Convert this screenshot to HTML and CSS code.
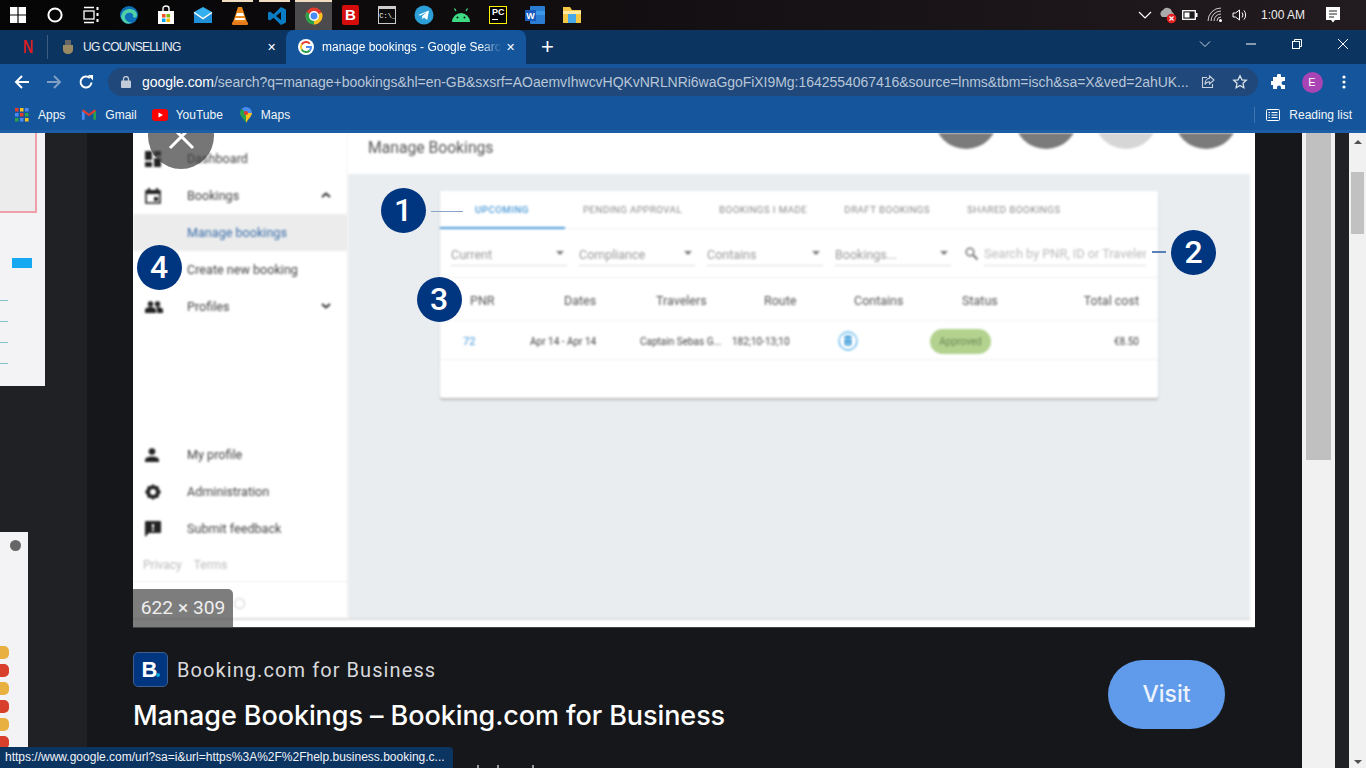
FILE: index.html
```html
<!DOCTYPE html>
<html lang="en">
<head>
<meta charset="UTF-8">
<title>manage bookings - Google Search</title>
<link rel="stylesheet" href="styles.css">
</head>
<body>

<div class="taskbar">
  <div class="task-icons">
    <span class="task"><svg width="18" height="18" viewBox="0 0 18 18"><path fill="#fff" d="M1 1h7.400v7.400H1zM9.600 1H17v7.400H9.600zM1 9.600h7.400V17H1zM9.600 9.600H17V17H9.600z"/></svg></span>
    <span class="task"><svg width="18" height="18" viewBox="0 0 18 18"><circle cx="9" cy="9" r="6.600" fill="none" stroke="#fff" stroke-width="2"/></svg></span>
    <span class="task"><svg width="18" height="18" viewBox="0 0 18 18" fill="none" stroke="#fff" stroke-width="1.300"><path d="M1 1.500h10M1 16.500h10"/><rect x="1" y="5" width="10" height="8"/><path d="M14.500 1v3M14.500 7v3M14.500 13v3" stroke-width="2"/></svg></span>
    <span class="task"><svg width="20" height="20" viewBox="0 0 20 20"><circle cx="10" cy="10" r="9" fill="#0c6fb8"/><path fill="#4fd1a5" d="M2 12c1-6 5-8 9-8 4 0 7 3 7 6 0 3-3 3-4 2 1-3-2-5-5-4-4 1-4 6-1 8 1 1 3 2 5 1-3 3-9 2-11-5z"/></svg></span>
    <span class="task"><svg width="18" height="20" viewBox="0 0 18 20"><path fill="none" stroke="#fff" stroke-width="1.400" d="M6 6V3.500C6 2 7 1 9 1s3 1 3 2.500V6"/><rect x="1" y="6" width="16" height="13" fill="#fff"/><path fill="#f25022" d="M5 9h3.500v3.500H5z"/><path fill="#7fba00" d="M9.500 9H13v3.500H9.500z"/><path fill="#00a4ef" d="M5 13.500h3.500V17H5z"/><path fill="#ffb900" d="M9.500 13.500H13V17H9.500z"/></svg></span>
    <span class="task"><svg width="20" height="18" viewBox="0 0 20 18"><path fill="#1f8fd8" d="M1 6h18v11H1z"/><path fill="#35b0ee" d="M1 6l9-5 9 5-9 6z"/><path fill="none" stroke="#fff" stroke-width="1.500" d="M1 6.500l9 6 9-6"/></svg></span>
    <span class="task task-open"><svg width="18" height="20" viewBox="0 0 18 20"><path fill="#f08a1d" d="M7 1h4l5 15H2z"/><path fill="#fff" d="M6 7h6l1 3H5zM4.500 12h9l.7 2H3.800z"/><rect x="1" y="16" width="16" height="3" rx="1" fill="#e8791a"/></svg></span>
    <span class="task task-open"><svg width="18" height="18" viewBox="0 0 18 18"><path fill="#0a7cc6" d="M13 0l5 2.400v13.200L13 18 5.500 10.800 2 13.500 0 12.500V5.500l2-1 3.500 2.700zM13 5L8 9l5 4z"/></svg></span>
    <span class="task task-on"><svg width="18" height="18" viewBox="0 0 18 18"><circle cx="9" cy="9" r="8.500" fill="#e33b2e"/><path fill="#f9c221" d="M9 9l7.700-3.500A8.500 8.500 0 0 1 9 17.500z"/><path fill="#2aa24b" d="M9 9L9 17.500A8.500 8.500 0 0 1 1.400 5z"/><circle cx="9" cy="9" r="4.200" fill="#4a8af4" stroke="#fff" stroke-width="1.500"/></svg></span>
    <span class="task"><span class="bdf">B</span></span>
    <span class="task"><span class="cmd"><i></i>C:\_</span></span>
    <span class="task"><svg width="20" height="20" viewBox="0 0 20 20"><circle cx="10" cy="10" r="9.500" fill="#2d9fd8"/><path fill="#fff" d="M4 10l11-4.500-1.800 9.500-3.200-2.400-1.600 1.600-.4-3 4.500-4-6 3.300z"/></svg></span>
    <span class="task"><svg width="20" height="16" viewBox="0 0 20 16"><path fill="#3ddc84" d="M1 15a9 9 0 0 1 18 0z"/><path stroke="#3ddc84" stroke-width="1.300" d="M5 4L3.500 1.500M15 4l1.500-2.500"/><circle cx="6.500" cy="10.500" r="1" fill="#111"/><circle cx="13.500" cy="10.500" r="1" fill="#111"/></svg></span>
    <span class="task"><span class="pycharm">PC<i></i></span></span>
    <span class="task"><svg width="20" height="18" viewBox="0 0 20 18"><rect x="5" y="0" width="15" height="18" rx="1" fill="#2b7cd3"/><rect x="11" y="5" width="9" height="4" fill="#41a5ee" opacity=".7"/><rect x="0" y="4" width="11" height="11" fill="#185abd"/><text x="5.500" y="13" text-anchor="middle" class="word-w">W</text></svg></span>
    <span class="task"><svg width="20" height="18" viewBox="0 0 20 18"><path fill="#f3c744" d="M1 1h7l2 3h9v13H1z"/><path fill="#ffe9a0" d="M1 5h18v3H1z"/><path fill="#46a8e8" d="M6 8h8v9H6z"/></svg></span>
  </div>
  <div class="tray">
    <svg width="14" height="14" viewBox="0 0 14 14"><path fill="none" stroke="#fff" stroke-width="1.200" d="M1 4l6 6 6-6"/></svg>
    <svg class="tray-cloud" width="18" height="18" viewBox="0 0 18 18"><path fill="#aaa" d="M3 11a4 4 0 0 1 1-7 5 5 0 0 1 9 2 3 3 0 0 1 1 5z"/><circle cx="12.500" cy="12.500" r="4.800" fill="#e02020"/><path stroke="#fff" stroke-width="1.200" d="M10.500 10.500l4 4M14.500 10.500l-4 4"/></svg>
    <svg width="16" height="12" viewBox="0 0 16 12"><rect x=".7" y="1.700" width="12.600" height="8.600" fill="none" stroke="#fff" stroke-width="1.300"/><rect x="2.500" y="3.500" width="5" height="5" fill="#fff"/><rect x="14" y="4" width="1.500" height="4" fill="#fff"/></svg>
    <svg width="16" height="16" viewBox="0 0 16 16" fill="none" stroke="#ccc"><path d="M1 14A13 13 0 0 1 14 1M4 14A10 10 0 0 1 14 4M7 14a7 7 0 0 1 7-7M10 14a4 4 0 0 1 4-4"/><circle cx="13.500" cy="13.500" r="1.500" fill="#fff" stroke="none"/></svg>
    <svg width="16" height="16" viewBox="0 0 16 16" fill="none" stroke="#fff"><path d="M1 6v4h2.500L7.500 13V3L3.500 6z"/><path d="M10 5.500a4 4 0 0 1 0 5M12 3.500a7 7 0 0 1 0 9"/></svg>
    <span class="clock">1:00 AM</span>
    <svg class="notif" width="18" height="18" viewBox="0 0 18 18"><path fill="#fff" d="M2 1h14v13h-5l-2 2.500L7 14H2z"/><path stroke="#222" d="M5 5h8M5 8h8M5 11h5"/></svg>
  </div>
</div>

<div class="tabstrip">
  <div class="tab-pinned"><span class="netflix">N</span></div>
  <div class="tab-off">
    <svg width="16" height="16" viewBox="0 0 16 16"><path fill="#9a8a64" d="M3 6h10v5c0 2-2 4-5 4s-5-2-5-4z"/><path fill="#666" d="M5 1h6v5H5z"/></svg>
    <span class="tab-title">UG COUNSELLING</span>
    <span class="tab-x">✕</span>
  </div>
  <div class="tab-on">
    <svg width="16" height="16" viewBox="0 0 16 16"><circle cx="8" cy="8" r="8" fill="#fff"/><path fill="none" stroke="#e33b2e" stroke-width="2" d="M11.800 4.700A5 5 0 0 0 3.700 5.500"/><path fill="none" stroke="#f9c221" stroke-width="2" d="M3.700 5.500a5 5 0 0 0 0 5"/><path fill="none" stroke="#2aa24b" stroke-width="2" d="M3.700 10.500a5 5 0 0 0 8 1"/><path fill="none" stroke="#4a8af4" stroke-width="2" d="M11.700 11.500A5 5 0 0 0 13 8H8"/></svg>
    <span class="tab-title tab-fade">manage bookings - Google Search</span>
    <span class="tab-x">✕</span>
  </div>
  <span class="tab-new">+</span>
  <div class="win-btns">
    <svg width="12" height="12" viewBox="0 0 12 12"><path fill="none" stroke="#c8d3df" d="M1 3.500l5 5 5-5"/></svg>
    <svg width="12" height="12" viewBox="0 0 12 12"><path stroke="#fff" d="M1 6h10"/></svg>
    <svg width="12" height="12" viewBox="0 0 12 12" fill="none" stroke="#fff"><rect x="1.500" y="3.500" width="7" height="7"/><path d="M3.500 3.500v-2h7v7h-2"/></svg>
    <svg width="12" height="12" viewBox="0 0 12 12"><path stroke="#fff" d="M1 1l10 10M11 1L1 11"/></svg>
  </div>
</div>

<div class="toolbar">
  <svg width="16" height="16" viewBox="0 0 16 16"><path fill="none" stroke="#fff" stroke-width="2" d="M15 8H2M8 2L2 8l6 6"/></svg>
  <svg width="16" height="16" viewBox="0 0 16 16"><path fill="none" stroke="#7f9fc4" stroke-width="2" d="M1 8h13M8 2l6 6-6 6"/></svg>
  <svg width="16" height="16" viewBox="0 0 16 16"><path fill="none" stroke="#fff" stroke-width="2" d="M13.500 8.500A5.500 5.500 0 1 1 11.800 4"/><path fill="#fff" d="M10 1h5v5.500z"/></svg>
  <div class="omnibox">
    <svg width="10" height="12" viewBox="0 0 10 12"><rect y="4.500" width="10" height="7.500" rx="1" fill="#c2ccd8"/><path fill="none" stroke="#c2ccd8" stroke-width="1.300" d="M2.500 5V3a2.500 2.500 0 0 1 5 0v2"/></svg>
    <div class="url"><b>google.com</b>/search?q=manage+bookings&amp;hl=en-GB&amp;sxsrf=AOaemvIhwcvHQKvNRLNRi6waGgoFiXI9Mg:1642554067416&amp;source=lnms&amp;tbm=isch&amp;sa=X&amp;ved=2ahUK...</div>
    <svg class="share" width="14" height="14" viewBox="0 0 14 14" fill="none" stroke="#c8d3df" stroke-width="1.100"><path d="M6 2.500H1.500v10h10V9"/><path d="M8.500 1l4.500 4-4.500 4V6.700C6 6.700 4.800 8 4 9.500 4 6 6 3.500 8.500 3.300z"/></svg>
    <svg width="16" height="16" viewBox="0 0 16 16"><path fill="none" stroke="#dbe3ec" stroke-width="1.300" d="M8 1.800l1.900 4 4.400.5-3.300 3 .9 4.400L8 11.500l-3.900 2.200.9-4.400-3.300-3 4.400-.5z"/></svg>
  </div>
  <svg width="16" height="16" viewBox="0 0 16 16"><path fill="#fff" d="M6 1.500a2 2 0 0 1 4 0V3h4v4h-1.500a2 2 0 0 0 0 4H14v4H10v-1.500a2 2 0 0 0-4 0V15H2v-4H.5a2 2 0 0 1 0-4H2V3h4z"/></svg>
  <span class="avatar">E</span>
  <svg width="4" height="14" viewBox="0 0 4 14"><circle cx="2" cy="2" r="1.600" fill="#fff"/><circle cx="2" cy="7" r="1.600" fill="#fff"/><circle cx="2" cy="12" r="1.600" fill="#fff"/></svg>
</div>

<div class="bookmarks">
  <span class="mark"><svg width="14" height="14" viewBox="0 0 14 14"><path fill="#e33b2e" d="M0 0h3.500v3.500H0z"/><path fill="#f9c221" d="M5 0h3.500v3.500H5z"/><path fill="#4a8af4" d="M10 0h3.500v3.500H10z"/><path fill="#4a8af4" d="M0 5h3.500v3.500H0z"/><path fill="#e33b2e" d="M5 5h3.500v3.500H5z"/><path fill="#2aa24b" d="M10 5h3.500v3.500H10z"/><path fill="#2aa24b" d="M0 10h3.500v3.500H0z"/><path fill="#4a8af4" d="M5 10h3.500v3.500H5z"/><path fill="#f9c221" d="M10 10h3.500v3.500H10z"/></svg>Apps</span>
  <span class="mark"><svg width="14" height="11" viewBox="0 0 16 12"><path fill="#4a8af4" d="M0 2h3v10H1a1 1 0 0 1-1-1z"/><path fill="#2aa24b" d="M13 2h3v9a1 1 0 0 1-1 1h-2z"/><path fill="#e33b2e" d="M0 2l8 6 8-6-1.500-2L8 5 1.500 0z"/></svg>Gmail</span>
  <span class="mark mark-yt"><svg width="16" height="12" viewBox="0 0 16 12"><rect width="16" height="12" rx="3" fill="#f00"/><path fill="#fff" d="M6.500 3.500L11 6l-4.500 2.500z"/></svg>YouTube</span>
  <span class="mark"><svg width="12" height="16" viewBox="0 0 12 16"><path fill="#2aa24b" d="M6 16C4 12 0 9 0 6a6 6 0 0 1 1.800-4.200L6 6z"/><path fill="#4a8af4" d="M6 0a6 6 0 0 1 6 6L6 6 1.800 1.800A6 6 0 0 1 6 0z"/><path fill="#f9c221" d="M12 6c0 3-4 6-6 10V6z"/><circle cx="6" cy="6" r="2" fill="#e33b2e"/></svg>Maps</span>
  <span class="reading"><svg width="14" height="14" viewBox="0 0 14 14" fill="none" stroke="#fff"><rect x=".5" y="1.500" width="13" height="11" rx="1"/><path d="M2.500 4.500h1.500M5.500 4.500h6M2.500 7h1.500M5.500 7h6M2.500 9.500h1.500M5.500 9.500h6"/></svg>Reading list</span>
</div>

<div class="viewport">
  <div class="results">
    <div class="thumb thumb-top"><i class="thumb-frame"></i><i class="thumb-btn"></i><i class="thumb-lines"></i></div>
    <div class="thumb thumb-bottom"><i class="thumb-avatar"></i><i class="pill"></i><i class="pill red"></i><i class="pill"></i><i class="pill red"></i><i class="pill"></i><i class="pill red"></i></div>
  </div>

  <div class="panel">
    <div class="shot">
      <aside class="side">
        <div class="nav nav-top">
          <div class="nav-row"><svg class="nav-ico" width="16" height="16" viewBox="0 0 16 16"><path fill="#222" d="M0 0h7v9H0zM9 0h7v5H9zM0 11h7v5H0zM9 7h7v9H9z"/></svg>Dashboard</div>
          <div class="nav-row"><svg class="nav-ico" width="16" height="16" viewBox="0 0 16 16"><path fill="none" stroke="#222" stroke-width="1.600" d="M1 3h14v12H1z"/><path fill="#222" d="M1 2h14v4H1zM3 0h2v3H3zM11 0h2v3h-2zM9 9h4v4H9z"/></svg>Bookings<svg class="caret" width="10" height="6" viewBox="0 0 10 6"><path fill="none" stroke="#333" stroke-width="2" d="M1 5l4-3.500L9 5"/></svg></div>
          <div class="nav-row nav-on">Manage bookings</div>
          <div class="nav-row">Create new booking</div>
          <div class="nav-row"><svg class="nav-ico" width="18" height="12" viewBox="0 0 18 12"><circle cx="5.500" cy="3" r="2.700" fill="#222"/><circle cx="12.500" cy="3" r="2.700" fill="#222"/><path fill="#222" d="M0 12V9c0-2 3-3 5.500-3S11 7 11 9v3zM12 12V8.500c0-1-.5-1.800-1-2.400l1.500-.1c2.500 0 5.500 1 5.500 3v3z"/></svg>Profiles<svg class="caret" width="10" height="6" viewBox="0 0 10 6"><path fill="none" stroke="#333" stroke-width="2" d="M1 1l4 3.500L9 1"/></svg></div>
        </div>
        <div class="nav">
          <div class="nav-row"><svg class="nav-ico" width="14" height="14" viewBox="0 0 14 14"><circle cx="7" cy="3.500" r="3.300" fill="#222"/><path fill="#222" d="M0 14v-2c0-2.500 4-3.500 7-3.500s7 1 7 3.500v2z"/></svg>My profile</div>
          <div class="nav-row"><svg class="nav-ico" width="16" height="16" viewBox="0 0 16 16"><path fill="#222" fill-rule="evenodd" d="M8 0l2 2h3l1 3 2 3-2 3-1 3h-3l-2 2-2-2H3l-1-3-2-3 2-3 1-3h3zM8 5a3 3 0 1 0 0 6 3 3 0 0 0 0-6z"/></svg>Administration</div>
          <div class="nav-row"><svg class="nav-ico" width="16" height="16" viewBox="0 0 16 16"><path fill="#222" d="M1 0h14a1 1 0 0 1 1 1v10a1 1 0 0 1-1 1H4l-4 4V1a1 1 0 0 1 1-1z"/><path fill="#fff" d="M7 3h2v4H7zM7 8h2v2H7z"/></svg>Submit feedback</div>
        </div>
        <div class="legal"><span>Privacy</span><span>Terms</span></div>
        <svg class="side-clock" width="13" height="13" viewBox="0 0 13 13"><circle cx="6.500" cy="6.500" r="5" fill="none" stroke="#ddd" stroke-width="1.500"/></svg>
      </aside>
      <div class="shot-main">
        <header class="shot-head">
          <h2>Manage Bookings</h2>
          <div class="head-btns"><i></i><i></i><i class="pale"></i><i></i></div>
        </header>
        <div class="card">
          <div class="card-tabs">
            <span class="ctab ctab-on">UPCOMING</span>
            <span class="ctab">PENDING APPROVAL</span>
            <span class="ctab">BOOKINGS I MADE</span>
            <span class="ctab">DRAFT BOOKINGS</span>
            <span class="ctab">SHARED BOOKINGS</span>
          </div>
          <div class="card-filters">
            <span class="sel">Current</span>
            <span class="sel">Compliance</span>
            <span class="sel">Contains</span>
            <span class="sel">Bookings...</span>
            <span class="search"><svg width="13" height="13" viewBox="0 0 13 13"><circle cx="5" cy="5" r="3.800" fill="none" stroke="#777" stroke-width="1.500"/><path stroke="#777" stroke-width="2" d="M8 8l4.500 4.500"/></svg><span class="search-box">Search by PNR, ID or Traveler</span></span>
          </div>
          <div class="grid grid-head">
            <span>PNR</span><span>Dates</span><span>Travelers</span><span>Route</span><span>Contains</span><span>Status</span><span class="cost">Total cost</span>
          </div>
          <div class="grid grid-row">
            <span class="pnr">72</span><span>Apr 14 - Apr 14</span><span>Captain Sebas G...</span><span>182;10-13;10</span>
            <span><svg width="20" height="20" viewBox="0 0 20 20"><circle cx="10" cy="10" r="9" fill="#fff" stroke="#5ab4ee" stroke-width="1.300"/><rect x="6.500" y="4.500" width="7" height="10" rx="1.500" fill="#3a9ad9"/><path stroke="#fff" d="M7 8h6M8 12h4"/></svg></span>
            <span><span class="approved">Approved</span></span><span class="cost">€8.50</span>
          </div>
        </div>
      </div>
    </div>
    <div class="shot-foot">
      <div class="foot-text">
        <div class="source"><span class="b-logo">B<i></i></span>Booking.com for Business</div>
        <div class="foot-title">Manage Bookings – Booking.com for Business</div>
      </div>
      <span class="visit">Visit</span>
    </div>
    <button class="close-btn" aria-label="Close"><svg width="27" height="27" viewBox="0 0 27 27"><path stroke="#fff" stroke-width="3" d="M2 2l23 23M25 2L2 25"/></svg></button>
    <span class="badge badge1 num">1</span><i class="lead lead1"></i>
    <span class="badge badge2 num">2</span><i class="lead lead2"></i>
    <span class="badge badge3 num">3</span>
    <span class="badge badge4 num">4</span>
    <span class="size-tag">622 × 309</span>
    <div class="cut-ticks"><i></i><i></i><i></i></div>
  </div>

  <div class="scroll-inner"><i></i></div>
  <div class="gutter"></div>
  <div class="scroll-outer"><span class="arrow"></span><i></i><span class="arrow arrow-down"></span></div>
  <div class="status-bubble">https://www.google.com/url?sa=i&amp;url=https%3A%2F%2Fhelp.business.booking.c...</div>
</div>

</body>
</html>
```

FILE: styles.css
```css
* {
  box-sizing: border-box;
}

html, body {
  height: 100%;
}

body {
  margin: 0;
  height: 768px;
  overflow: hidden;
  display: flex;
  flex-direction: column;
  font-family: "Liberation Sans", Arial, sans-serif;
  background-color: #202124;
  color: #fff;
}

/* windows taskbar */
.taskbar {
  height: 30px;
  flex: none;
  display: flex;
  justify-content: space-between;
  background: linear-gradient(90deg, #050506 0, #0e0b0d 30%, #221b1f 100%);
}

.task-icons {
  display: flex;
}

.task {
  width: 36.9px;
  height: 30px;
  display: flex;
  align-items: center;
  justify-content: center;
  flex: none;
}

.task-open {
  border-top: 2px solid;
  border-image: linear-gradient(90deg, transparent 2px, #f0dcc0 2px, #f0dcc0 calc(100% - 6px), transparent calc(100% - 6px)) 1;
}

.task-on {
  background-color: #4b4a4c;
  border-top: 2px solid #f0dcc0;
}

.bdf {
  width: 17px;
  height: 20px;
  border-radius: 2px;
  background-color: #d40c0c;
  font-weight: bold;
  font-size: 15px;
  line-height: 20px;
  text-align: center;
}

.cmd {
  width: 18px;
  height: 18px;
  border: 1px solid #ccc;
  background-color: #0c0c0c;
  font-family: "Liberation Mono", monospace;
  font-size: 7px;
  line-height: 14px;
  position: relative;
  overflow: hidden;
}

.cmd i {
  display: block;
  height: 2px;
  background-color: #ccc;
}

.pycharm {
  width: 18px;
  height: 18px;
  background-color: #000;
  border: 1px solid #fff200;
  font-size: 9px;
  font-weight: bold;
  line-height: 11px;
  padding-left: 2px;
}

.pycharm i {
  display: block;
  width: 6px;
  height: 1px;
  background-color: #fff;
  margin-top: 1px;
}

.word-w {
  font-family: "Liberation Sans", sans-serif;
  font-size: 9px;
  font-weight: bold;
  fill: #fff;
}

.tray {
  display: flex;
  align-items: center;
  gap: 9px;
  padding-right: 24px;
}

.tray-cloud {
  margin: 0 -4px 0 -2px;
}

.clock {
  font-size: 12px;
  margin: 0 10px 0 4px;
  color: #eee;
}

/* chrome tabs */
.tabstrip {
  height: 34px;
  flex: none;
  display: flex;
  align-items: stretch;
  background-color: #0c3461;
  font-size: 12px;
  position: relative;
}

.tab-pinned {
  width: 47px;
  flex: none;
  padding-left: 21px;
  display: flex;
  align-items: center;
}

.netflix {
  width: 15px;
  color: #d81f26;
  font-size: 18px;
  font-weight: bold;
  text-align: center;
  transform: scaleX(.8);
}

.tab-off {
  width: 239px;
  flex: none;
  height: 24px;
  margin-top: 5px;
  display: flex;
  align-items: center;
  padding: 0 10px 0 12px;
  color: #e8edf3;
  border-left: 1px solid #3d5d82;
}

.tab-off .tab-title {
  margin-left: 7px;
  letter-spacing: -.7px;
}

.tab-title {
  margin-left: 8px;
  flex: 1;
  min-width: 0;
  white-space: nowrap;
  overflow: hidden;
}

.tab-fade {
  margin-right: 4px;
  -webkit-mask-image: linear-gradient(90deg, #000 88%, transparent 100%);
  mask-image: linear-gradient(90deg, #000 88%, transparent 100%);
}

.tab-x {
  font-size: 11px;
  color: #fff;
}

.tab-on {
  width: 240px;
  flex: none;
  display: flex;
  align-items: center;
  padding: 0 11px 0 12px;
  background-color: #14559b;
  border-radius: 8px 8px 0 0;
  color: #fff;
}

.tab-new {
  margin-left: 15px;
  font-size: 22px;
  line-height: 34px;
}

.win-btns {
  margin-left: auto;
  display: flex;
  align-items: center;
  gap: 34px;
  padding-right: 17px;
  padding-bottom: 6px;
}

/* chrome toolbar */
.toolbar {
  height: 34px;
  flex: none;
  display: flex;
  align-items: center;
  gap: 16px;
  padding: 2px 20px 0 14px;
  background-color: #14559b;
}

.omnibox {
  flex: 1;
  height: 28px;
  min-width: 0;
  border-radius: 14px;
  background-color: #20487a;
  display: flex;
  align-items: center;
  padding: 0 10px 0 13px;
  gap: 14px;
  margin-left: -2px;
  margin-right: -3px;
}

.url {
  flex: 1;
  min-width: 0;
  font-size: 14px;
  letter-spacing: -.04px;
  margin-left: -3px;
  white-space: nowrap;
  overflow: hidden;
  color: #b8c6d8;
}

.url b {
  font-weight: normal;
  color: #fff;
}

.share {
  margin: 0 3px 0 -3px;
}

.avatar {
  width: 21px;
  height: 21px;
  flex: none;
  border-radius: 50%;
  background-color: #a944b4;
  font-size: 11px;
  line-height: 21px;
  text-align: center;
  margin: 0 3.5px 0 -1.5px;
}

/* bookmarks bar */
.bookmarks {
  height: 35px;
  flex: none;
  display: flex;
  align-items: center;
  gap: 17px;
  padding: 1px 14px 0 15px;
  font-size: 12px;
  background-color: #14559b;
  border-bottom: 3px solid #1c5da6;
  color: #f2f5f9;
}

.mark {
  display: flex;
  align-items: center;
  gap: 9px;
}

.mark-yt {
  margin-left: -2px;
  gap: 8px;
}

.reading {
  margin-left: auto;
  padding-left: 11px;
  display: flex;
  align-items: center;
  gap: 9px;
  border-left: 1px solid #3f74ae;
  height: 16px;
}

/* page area */
.viewport {
  flex: 1;
  min-height: 0;
  display: flex;
  position: relative;
  overflow: hidden;
  background-color: #202124;
}

.results {
  width: 87px;
  flex: none;
  position: relative;
}

.thumb {
  position: absolute;
  left: 0;
  background-color: #f3f3f5;
}

.thumb-top {
  top: 0;
  width: 45px;
  height: 253px;
}

.thumb-frame {
  position: absolute;
  left: -4px;
  top: -4px;
  width: 41px;
  height: 84px;
  border: 2px solid #eda0a8;
  background-color: #ececec;
  filter: blur(.5px);
}

.thumb-btn {
  position: absolute;
  left: 12px;
  top: 125px;
  width: 20px;
  height: 10px;
  background-color: #16a8f0;
  filter: blur(.5px);
}

.thumb-lines {
  position: absolute;
  left: 0;
  top: 167px;
  width: 8px;
  height: 84px;
  background: repeating-linear-gradient(180deg, #7fc4c8 0, #7fc4c8 1px, transparent 1px, transparent 21px);
  filter: blur(.5px);
}

.thumb-bottom {
  top: 399px;
  width: 28px;
  height: 236px;
  padding-top: 114px;
  display: flex;
  flex-direction: column;
  align-items: flex-start;
  gap: 5px;
}

.thumb-avatar {
  position: absolute;
  left: 10px;
  top: 8px;
  width: 11px;
  height: 11px;
  border-radius: 50%;
  background-color: #666;
  filter: blur(.5px);
}

.pill {
  width: 9px;
  height: 13px;
  border-radius: 0 5px 5px 0;
  background-color: #e8b040;
  filter: blur(.5px);
}

.pill.red {
  background-color: #d8402c;
}

.panel {
  width: 1215px;
  flex: none;
  background-color: #16171a;
  position: relative;
  padding-left: 46px;
  display: flex;
  flex-direction: column;
}

/* the preview image, blurred because it is scaled up */
.shot {
  width: 1122px;
  height: 495px;
  flex: none;
  display: flex;
  background-color: #fff;
  padding: 0 5px 7px 0;
  border-bottom: 1px solid #444;
  color: #444;
  font-family: Roboto, sans-serif;
  overflow: hidden;
}

.side {
  width: 215px;
  flex: none;
  filter: blur(.8px);
  font-size: 12.6px;
  display: flex;
  flex-direction: column;
  background-color: #fff;
  border-right: 1px solid #eee;
  border-bottom: 2px solid #ddd;
  color: #444;
}

.nav-top {
  margin-top: 7px;
  height: 296px;
}

.nav-row {
  height: 37px;
  padding-left: 54px;
  display: flex;
  align-items: center;
  position: relative;
}

.nav-ico {
  position: absolute;
  left: 12px;
  top: 50%;
  transform: translateY(-50%);
}

.nav-on {
  background-color: #ececec;
  color: #3a6ea8;
}

.caret {
  position: absolute;
  right: 16px;
  top: 15px;
}

.legal {
  display: flex;
  gap: 12px;
  padding: 11px 0 9px 10px;
  font-size: 12px;
  line-height: 14px;
  color: #bbb;
  border-bottom: 1px solid #eee;
}

.side-clock {
  margin: 15px 0 0 100px;
}

.shot-main {
  flex: 1;
  filter: blur(.8px);
  background-color: #e9edf0;
  min-width: 0;
  border-bottom: 2px solid #ddd;
}

.shot-head {
  height: 41px;
  background-color: #fff;
  display: flex;
  justify-content: space-between;
  padding: 0 12px 0 20px;
  overflow: hidden;
}

.shot-head h2 {
  margin: 6px 0 0;
  font-size: 15.7px;
  line-height: 18px;
  font-weight: 400;
  color: #555;
}

.head-btns {
  display: flex;
  gap: 16px;
  margin-top: -48px;
}

.head-btns i {
  width: 64px;
  height: 64px;
  border-radius: 50%;
  background-color: #7b7b7b;
}

.head-btns i.pale {
  background-color: #d6d6d6;
}

.card {
  width: 718px;
  height: 207px;
  margin: 17px 0 0 92px;
  background-color: #fff;
  box-shadow: 0 2px 2px #bbb;
  border-radius: 2px;
  font-size: 11px;
}

.card-tabs {
  height: 38px;
  display: flex;
  border-bottom: 1px solid #f0f0f0;
  font-size: 9.7px;
  letter-spacing: .45px;
  color: #888;
}

.ctab {
  padding: 0 18.5px;
  display: flex;
  align-items: center;
  white-space: nowrap;
}

.ctab-on {
  width: 124.5px;
  padding: 0 0 0 35px;
  color: #4a9ad8;
  font-weight: 500;
  border-bottom: 2px solid #4a9ad8;
  height: 38px;
}

.card-filters {
  height: 49px;
  display: flex;
  gap: 12px;
  padding: 12px 11px 0;
  border-bottom: 1px solid #eee;
  color: #999;
  font-size: 12.5px;
}

.sel {
  width: 116px;
  height: 25px;
  padding-top: 2px;
  border-bottom: 1px solid #ddd;
  display: flex;
  align-items: center;
  position: relative;
}

.sel::after {
  content: "";
  position: absolute;
  right: 3px;
  top: 10px;
  border: 4px solid transparent;
  border-top: 4px solid #777;
  border-bottom: 0;
}

.search {
  display: flex;
  align-items: center;
  gap: 6px;
  height: 25px;
  margin-left: 2px;
}

.search-box {
  width: 162px;
  height: 25px;
  border-bottom: 1px solid #ddd;
  font-size: 12.7px;
  line-height: 25px;
  color: #bbb;
  white-space: nowrap;
  overflow: hidden;
}

.grid {
  display: grid;
  padding: 0 19px 0 11px;
  align-items: center;
  white-space: nowrap;
}

.grid-head {
  height: 43px;
  padding-top: 2px;
  font-size: 12.5px;
  color: #555;
  border-bottom: 1px solid #f2f2f2;
  padding-left: 30px;
  grid-template-columns: 94px 92px 108px 90px 108px 60px 1fr;
}

.grid-row {
  height: 39px;
  padding-top: 2px;
  font-size: 10px;
  color: #444;
  border-bottom: 1px solid #f0f0f0;
  padding-left: 23px;
  grid-template-columns: 67px 110px 92px 106px 92px 93px 1fr;
}

.grid-row svg {
  display: block;
}

.pnr {
  color: #3f96d8;
  font-size: 11px;
}

.cost {
  text-align: right;
}

.approved {
  display: inline-block;
  width: 61px;
  height: 25px;
  line-height: 25px;
  border-radius: 13px;
  background-color: #b2d28e;
  text-align: center;
  color: #6d8a58;
}

/* footer under the preview */
.shot-foot {
  flex: 1;
  display: flex;
  justify-content: space-between;
  padding: 24px 77px 0 0;
}

.source {
  display: flex;
  align-items: center;
  gap: 9px;
  font-family: Roboto, sans-serif;
  font-size: 20px;
  letter-spacing: 1.08px;
  color: #d8d9dc;
}

.b-logo {
  width: 35px;
  height: 35px;
  border-radius: 5px;
  background-color: #003580;
  border: 1px solid #3e5f8f;
  color: #fff;
  font-family: "Liberation Sans", sans-serif;
  font-size: 22px;
  font-weight: bold;
  letter-spacing: 0;
  display: flex;
  align-items: center;
  justify-content: center;
  padding-right: 2px;
  position: relative;
}

.b-logo i {
  position: absolute;
  right: 7px;
  bottom: 9px;
  width: 4px;
  height: 4px;
  border-radius: 50%;
  background-color: #00a7e1;
}

.foot-title {
  margin-top: 13px;
  font-family: Inter, sans-serif;
  font-size: 27px;
  line-height: 31px;
  font-weight: 500;
  letter-spacing: -.08px;
  color: #fff;
  white-space: nowrap;
}

.visit {
  width: 117px;
  height: 69px;
  margin-top: 8px;
  border-radius: 35px;
  background-color: #5f9aeb;
  text-align: center;
  line-height: 68px;
  font-family: Inter, sans-serif;
  font-size: 23px;
  font-weight: 500;
  color: #edf2fb;
}

/* things lying over the preview */
.close-btn {
  position: absolute;
  left: 61px;
  top: -30px;
  width: 66px;
  height: 66px;
  padding: 0;
  border: 0;
  border-radius: 50%;
  background-color: rgba(60, 60, 60, .7);
  display: flex;
  align-items: center;
  justify-content: center;
}

.badge {
  position: absolute;
  width: 45px;
  height: 45px;
  border-radius: 50%;
  background-color: #003580;
  color: #fff;
  font-family: Roboto, sans-serif;
  font-size: 32px;
  font-weight: 500;
  line-height: 45px;
  text-align: center;
}

.badge1 { left: 293.5px; top: 55px; }
.badge2 { left: 1084px; top: 97px; }
.badge3 { left: 329.5px; top: 143.5px; }
.badge4 { left: 49.5px; top: 111.5px; }

.lead {
  position: absolute;
  height: 1px;
  background-color: #8aa4c8;
}

.lead1 { left: 344px; top: 78px; width: 32px; }
.lead2 { left: 1065px; top: 118px; width: 14px; height: 2px; background-color: #5a80b8; }

.size-tag {
  position: absolute;
  left: 46px;
  top: 456px;
  width: 100px;
  height: 38px;
  border-radius: 0 5px 0 0;
  background-color: rgba(70, 70, 70, .7);
  font-family: Roboto, sans-serif;
  font-size: 19.2px;
  line-height: 37px;
  text-align: center;
  color: #eee;
}

.cut-ticks {
  position: absolute;
  left: 390px;
  bottom: 0;
  display: flex;
  gap: 18px;
}

.cut-ticks i {
  width: 2px;
  height: 3px;
  background-color: #999;
}

.cut-ticks i:last-child {
  margin-left: 15px;
}

/* scrollbars */
.scroll-inner {
  width: 33px;
  flex: none;
  background-color: #f1f1f1;
  padding: 0 4px;
}

.scroll-inner i {
  display: block;
  height: 327px;
  background-color: #c0c0c0;
}

.gutter {
  width: 14px;
  flex: none;
}

.scroll-outer {
  width: 17px;
  flex: none;
  background-color: #f1f1f1;
  position: relative;
}

.scroll-outer i {
  position: absolute;
  left: 2px;
  top: 39px;
  width: 13px;
  height: 62px;
  background-color: #c1c1c1;
}

.arrow {
  position: absolute;
  left: 5px;
  top: 7px;
  border: 4px solid transparent;
  border-top: 0;
  border-bottom: 4px solid #505050;
}

.arrow-down {
  top: auto;
  bottom: 4px;
  border-bottom: 0;
  border-top: 4px solid #505050;
}

.status-bubble {
  position: absolute;
  left: 0;
  bottom: 0;
  width: 453px;
  height: 21px;
  padding-left: 5px;
  border-radius: 0 4px 0 0;
  background-color: #0c3461;
  font-size: 12px;
  line-height: 21px;
  color: #f0f3f7;
  white-space: nowrap;
  overflow: hidden;
}
```
